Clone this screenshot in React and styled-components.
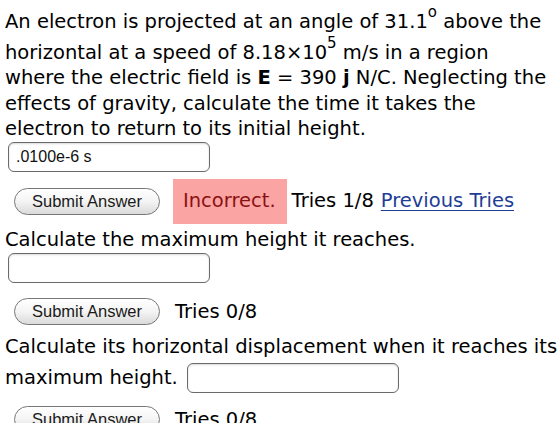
import styled, { createGlobalStyle } from "styled-components";

const Global = createGlobalStyle`
  html, body {
    margin: 0;
    padding: 0;
    background: #fff;
  }
  body {
    font-family: "DejaVu Sans", Verdana, sans-serif;
    color: #000;
  }
`;

const Page = styled.div`
  padding: 4px 5px 0;
  font-size: 19.5px;
  line-height: 25.5px;
`;

const Question = styled.div`
  margin: 0;
`;

/* short line box so the raised glyph only nudges its line down a little */
const Sup = styled.sup`
  font-size: 15px;
  line-height: 17px;
  vertical-align: 11px;
`;

const AnswerRow = styled.div`
  display: flex;
  padding-left: 3px;
`;

const Field = styled.input`
  box-sizing: border-box;
  width: ${(p) => p.w || 202}px;
  height: 30px;
  border: 1px solid #6a6a6a;
  border-radius: 6px;
  padding: 0 7px;
  font-family: "Liberation Sans", Arial, sans-serif;
  font-size: 16px;
  color: #111;
  background: #fff;
  box-shadow: inset 0 1px 2px rgba(0, 0, 0, 0.15);
  outline: none;
`;

const Status = styled.div`
  display: flex;
  align-items: center;
  height: 45px;
  padding-left: 9px;
  margin: ${(p) => p.mt || 0}px 0 ${(p) => p.mb || 0}px;
`;

const SubmitButton = styled.button`
  box-sizing: border-box;
  width: 146px;
  height: 27px;
  margin-right: ${(p) => p.gap || 15}px;
  border: 1px solid #777;
  border-radius: 14px;
  background: linear-gradient(#ffffff, #f4f4f4 50%, #dadada);
  font-family: "Liberation Sans", Arial, sans-serif;
  font-size: 16.5px;
  color: #1a1a1a;
  padding: 0;
`;

const Incorrect = styled.span`
  display: flex;
  align-items: center;
  height: 45px;
  padding: 0 11px 0 10px;
  margin-right: 5px;
  background: #fba4a4;
  color: #8a1212;
`;

const Tries = styled.span`
  margin-right: 7px;
`;

const Link = styled.a`
  color: #1f3d96;
  text-decoration: underline;
  text-decoration-thickness: 1px;
  text-underline-offset: 3px;
`;

const Part = styled.div`
  white-space: nowrap;
`;

const InlineAnswer = styled.div`
  display: flex;
  align-items: center;
  gap: 9px;
  margin-top: 3.5px;
`;

export default function App() {
  return (
    <Page>
      <Global />
      <Question>
        An electron is projected at an angle of 31.1<Sup>o</Sup> above the
        <br />
        horizontal at a speed of 8.18&times;10<Sup>5</Sup> m/s in a region
        <br />
        where the electric field is <b>E</b> = 390 <b>j</b> N/C. Neglecting the
        <br />
        effects of gravity, calculate the time it takes the
        <br />
        electron to return to its initial height.
      </Question>
      <AnswerRow>
        <Field defaultValue=".0100e-6 s" />
      </AnswerRow>
      <Status mt={7} mb={3.5}>
        <SubmitButton gap={13}>Submit Answer</SubmitButton>
        <Incorrect>Incorrect.</Incorrect>
        <Tries>Tries 1/8</Tries>
        <Link href="#">Previous Tries</Link>
      </Status>
      <Part>Calculate the maximum height it reaches.</Part>
      <AnswerRow>
        <Field />
      </AnswerRow>
      <Status mt={6.5}>
        <SubmitButton>Submit Answer</SubmitButton>
        <Tries>Tries 0/8</Tries>
      </Status>
      <Part>
        Calculate its horizontal displacement when it reaches its
        <InlineAnswer>
          maximum height.
          <Field w={212} />
        </InlineAnswer>
      </Part>
      <Status mt={4}>
        <SubmitButton>Submit Answer</SubmitButton>
        <Tries>Tries 0/8</Tries>
      </Status>
    </Page>
  );
}
